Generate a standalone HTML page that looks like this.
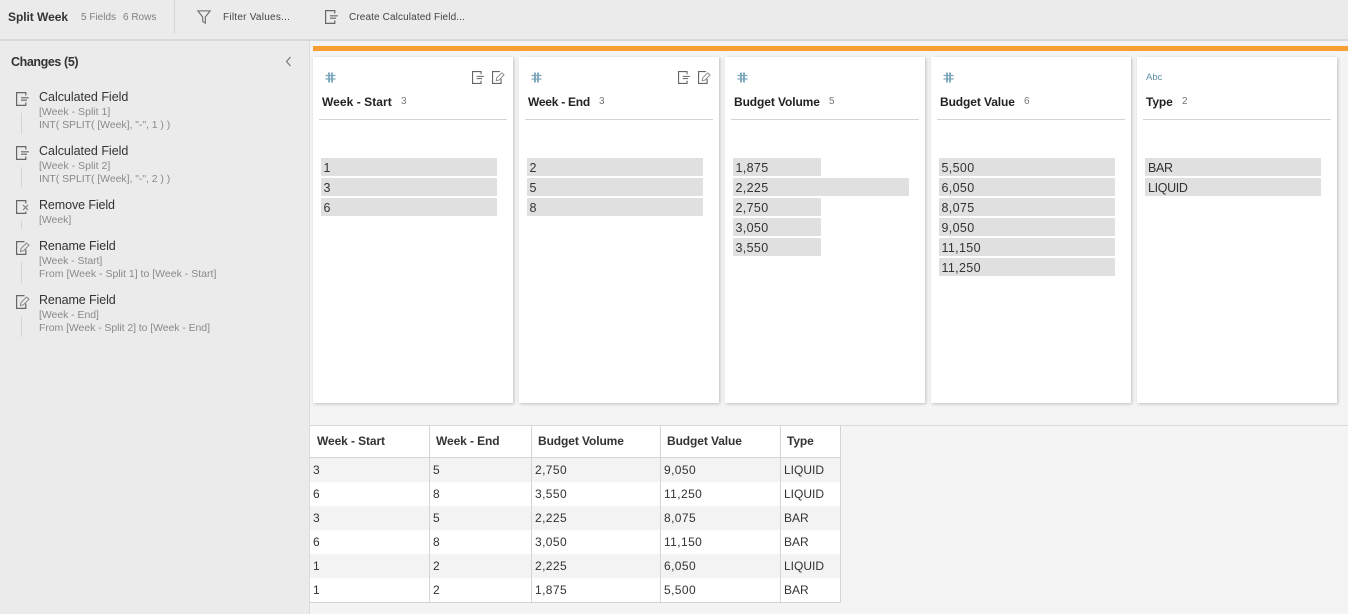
<!DOCTYPE html>
<html><head><meta charset="utf-8"><style>
html,body{margin:0;padding:0;width:1348px;height:614px;overflow:hidden;background:#f4f4f4}
body{position:relative;font-family:"Liberation Sans",sans-serif;color:#2a2a2a}
div,span,svg{position:absolute;white-space:nowrap}
.t{line-height:16px;height:16px}
.title{font-size:12.5px;color:#333;letter-spacing:-.02px}
.sub{font-size:10.5px;color:#8a8a8a;letter-spacing:-.05px}
.card{top:57px;width:200px;height:346px;background:#fff;box-shadow:1px 1px 3px rgba(0,0,0,.22)}
.rule{left:6px;top:62px;width:188px;height:1px;background:#d4d4d4}
.h{left:9px;top:37px;font-size:12px;font-weight:bold;color:#222;letter-spacing:-.1px}
.c{top:37px;font-size:10px;color:#777}
.bar{background:#e0e0e0;height:18px;font-size:12.5px;line-height:20px;color:#333;box-sizing:border-box;padding-left:3px}
.n{padding-left:2.5px;letter-spacing:.35px}
.cap{letter-spacing:-.35px}
.th{top:426px;font-size:12px;font-weight:bold;color:#333;line-height:31px;letter-spacing:-.1px}
.td{font-size:12px;color:#333;line-height:24px}
.m{letter-spacing:.4px}
.vl{top:425px;width:1px;height:178px;background:#d4d4d4}
.row{left:310px;width:530px;height:24px}
.ln{left:39px;width:0;border-left:1px solid #d4d4d4}
.i{fill:none;stroke:#666;stroke-width:1.2}
</style></head><body>

<svg width="0" height="0" style="left:0;top:0"><defs>
<symbol id="calc" viewBox="0 0 13 14"><path d="M9.8 3.5V.6H.6V13.4H9.8V10.5" fill="none" stroke="#666" stroke-width="1.2"/><path d="M5 5.8H12.8M5 8.2H11" fill="none" stroke="#666" stroke-width="1.1"/></symbol>
<symbol id="edit" viewBox="0 0 14 14"><path d="M8.5 .6H.6V13.4H9.8V8.5" fill="none" stroke="#666" stroke-width="1.2"/><path d="M4.5 10.5L5 7.5 10.5 2 13 4.2 7.5 9.8Z" fill="none" stroke="#888" stroke-width="1"/></symbol>
<symbol id="hash" viewBox="0 0 11 11"><path d="M4 .5V10.5M7 .5V10.5" fill="none" stroke="#3f7f9f" stroke-width="1.3"/><path d="M.5 3.5H10.5M.5 7H10.5" fill="none" stroke="#7ea6ba" stroke-width="1.2"/></symbol>
</defs></svg>

<!-- top bar -->
<div style="left:0;top:0;width:1348px;height:39px;background:#ebebeb"></div>
<div style="left:0;top:39px;width:1348px;height:2px;background:#d8d8d8"></div>
<div style="left:174px;top:0;width:1px;height:34px;background:#d4d4d4"></div>
<div class="t" style="left:8px;top:9px;font-size:12px;font-weight:bold;color:#333;letter-spacing:-.05px">Split Week</div>
<div class="t" style="left:81px;top:10px;font-size:10px;color:#808080">5 Fields</div>
<div class="t" style="left:123px;top:10px;font-size:10px;color:#808080">6 Rows</div>
<svg style="left:197px;top:10px" width="14" height="14" viewBox="0 0 16 16"><path d="M1 1H15L9.5 8V15L6.5 13V8Z" class="i"/></svg>
<div class="t" style="left:223px;top:10px;font-size:10px;color:#444;letter-spacing:.25px">Filter Values...</div>
<svg style="left:325px;top:10px" width="13" height="14"><use href="#calc"/></svg>
<div class="t" style="left:349px;top:10px;font-size:10px;color:#444;letter-spacing:.12px">Create Calculated Field...</div>

<!-- sidebar -->
<div style="left:0;top:41px;width:309px;height:573px;background:#ebebeb"></div>
<div style="left:309px;top:41px;width:1px;height:573px;background:#dcdcdc"></div>
<div class="t" style="left:11px;top:54px;font-size:12.5px;font-weight:bold;color:#333;letter-spacing:-.4px">Changes (5)</div>
<svg style="left:285px;top:56px" width="7" height="11"><path d="M5.5 1L1.5 5.5 5.5 10" fill="none" stroke="#777" stroke-width="1.2"/></svg>

<svg style="left:16px;top:92px" width="13" height="14"><use href="#calc"/></svg>
<div class="ln" style="left:21px;top:113px;height:21px"></div>
<div class="t title" style="left:39px;top:89px">Calculated Field</div>
<div class="t sub" style="left:39px;top:104px;letter-spacing:.02px">[Week - Split 1]</div>
<div class="t sub" style="left:39px;top:117px">INT( SPLIT( [Week], "-", 1 ) )</div>

<svg style="left:16px;top:146px" width="13" height="14"><use href="#calc"/></svg>
<div class="ln" style="left:21px;top:167px;height:21px"></div>
<div class="t title" style="left:39px;top:143px">Calculated Field</div>
<div class="t sub" style="left:39px;top:158px;letter-spacing:.02px">[Week - Split 2]</div>
<div class="t sub" style="left:39px;top:171px">INT( SPLIT( [Week], "-", 2 ) )</div>

<svg style="left:16px;top:200px" width="13" height="14" viewBox="0 0 13 14"><path d="M9.8 3.5V.6H.6V13.4H9.8V11.5" class="i"/><path d="M7 5L12 10M12 5L7 10" fill="none" stroke="#777" stroke-width="1"/></svg>
<div class="ln" style="left:21px;top:221px;height:8px"></div>
<div class="t title" style="left:39px;top:197px;letter-spacing:-.1px">Remove Field</div>
<div class="t sub" style="left:39px;top:212px">[Week]</div>

<svg style="left:16px;top:241px" width="14" height="14"><use href="#edit"/></svg>
<div class="ln" style="left:21px;top:262px;height:21px"></div>
<div class="t title" style="left:39px;top:238px;letter-spacing:-.1px">Rename Field</div>
<div class="t sub" style="left:39px;top:253px">[Week - Start]</div>
<div class="t sub" style="left:39px;top:266px;letter-spacing:.01px">From [Week - Split 1] to [Week - Start]</div>

<svg style="left:16px;top:295px" width="14" height="14"><use href="#edit"/></svg>
<div class="ln" style="left:21px;top:316px;height:21px"></div>
<div class="t title" style="left:39px;top:292px;letter-spacing:-.1px">Rename Field</div>
<div class="t sub" style="left:39px;top:307px">[Week - End]</div>
<div class="t sub" style="left:39px;top:320px;letter-spacing:-.07px">From [Week - Split 2] to [Week - End]</div>

<!-- orange bar -->
<div style="left:313px;top:46px;width:1035px;height:5px;background:#f89f33"></div>

<!-- cards -->
<div class="card" style="left:313px">
 <svg style="left:12px;top:15px" width="11" height="11"><use href="#hash"/></svg>
 <svg style="left:159px;top:14px" width="12" height="13"><use href="#calc"/></svg>
 <svg style="left:179px;top:14px" width="13" height="13"><use href="#edit"/></svg>
 <div class="t h" style="left:9px;letter-spacing:.05px">Week - Start</div><div class="t c" style="left:88px">3</div>
 <div class="rule"></div>
 <div class="bar n" style="left:8px;top:101px;width:176px">1</div>
 <div class="bar n" style="left:8px;top:121px;width:176px">3</div>
 <div class="bar n" style="left:8px;top:141px;width:176px">6</div>
</div>
<div class="card" style="left:519px">
 <svg style="left:12px;top:15px" width="11" height="11"><use href="#hash"/></svg>
 <svg style="left:159px;top:14px" width="12" height="13"><use href="#calc"/></svg>
 <svg style="left:179px;top:14px" width="13" height="13"><use href="#edit"/></svg>
 <div class="t h" style="letter-spacing:-.25px">Week - End</div><div class="t c" style="left:80px">3</div>
 <div class="rule"></div>
 <div class="bar n" style="left:8px;top:101px;width:176px">2</div>
 <div class="bar n" style="left:8px;top:121px;width:176px">5</div>
 <div class="bar n" style="left:8px;top:141px;width:176px">8</div>
</div>
<div class="card" style="left:725px">
 <svg style="left:12px;top:15px" width="11" height="11"><use href="#hash"/></svg>
 <div class="t h">Budget Volume</div><div class="t c" style="left:104px">5</div>
 <div class="rule"></div>
 <div class="bar n" style="left:8px;top:101px;width:88px">1,875</div>
 <div class="bar n" style="left:8px;top:121px;width:176px">2,225</div>
 <div class="bar n" style="left:8px;top:141px;width:88px">2,750</div>
 <div class="bar n" style="left:8px;top:161px;width:88px">3,050</div>
 <div class="bar n" style="left:8px;top:181px;width:88px">3,550</div>
</div>
<div class="card" style="left:931px">
 <svg style="left:12px;top:15px" width="11" height="11"><use href="#hash"/></svg>
 <div class="t h">Budget Value</div><div class="t c" style="left:93px">6</div>
 <div class="rule"></div>
 <div class="bar n" style="left:8px;top:101px;width:176px">5,500</div>
 <div class="bar n" style="left:8px;top:121px;width:176px">6,050</div>
 <div class="bar n" style="left:8px;top:141px;width:176px">8,075</div>
 <div class="bar n" style="left:8px;top:161px;width:176px">9,050</div>
 <div class="bar n" style="left:8px;top:181px;width:176px">11,150</div>
 <div class="bar n" style="left:8px;top:201px;width:176px">11,250</div>
</div>
<div class="card" style="left:1137px">
 <div class="t" style="left:9px;top:13px;font-size:9.5px;color:#5f8da6">Abc</div>
 <div class="t h">Type</div><div class="t c" style="left:45px">2</div>
 <div class="rule"></div>
 <div class="bar cap" style="left:8px;top:101px;width:176px">BAR</div>
 <div class="bar cap" style="left:8px;top:121px;width:176px">LIQUID</div>
</div>

<!-- table -->
<div style="left:310px;top:425px;width:1038px;height:1px;background:#d8d8d8"></div>
<div style="left:310px;top:426px;width:530px;height:31px;background:#fff"></div>
<div class="row" style="top:458px;background:#f3f3f3"></div>
<div class="row" style="top:482px;background:#fff"></div>
<div class="row" style="top:506px;background:#f3f3f3"></div>
<div class="row" style="top:530px;background:#fff"></div>
<div class="row" style="top:554px;background:#f3f3f3"></div>
<div class="row" style="top:578px;background:#fff"></div>
<div style="left:310px;top:457px;width:531px;height:1px;background:#d4d4d4"></div>
<div style="left:310px;top:602px;width:531px;height:1px;background:#d4d4d4"></div>
<div class="vl" style="left:429px"></div>
<div class="vl" style="left:531px"></div>
<div class="vl" style="left:660px"></div>
<div class="vl" style="left:780px"></div>
<div class="vl" style="left:840px"></div>

<div class="th" style="left:317px">Week - Start</div>
<div class="th" style="left:436px">Week - End</div>
<div class="th" style="left:538px">Budget Volume</div>
<div class="th" style="left:667px">Budget Value</div>
<div class="th" style="left:787px">Type</div>

<div class="td m" style="left:313px;top:458px">3</div><div class="td m" style="left:433px;top:458px">5</div><div class="td m" style="left:535px;top:458px">2,750</div><div class="td m" style="left:664px;top:458px">9,050</div><div class="td" style="left:784px;top:458px">LIQUID</div>
<div class="td m" style="left:313px;top:482px">6</div><div class="td m" style="left:433px;top:482px">8</div><div class="td m" style="left:535px;top:482px">3,550</div><div class="td m" style="left:664px;top:482px">11,250</div><div class="td" style="left:784px;top:482px">LIQUID</div>
<div class="td m" style="left:313px;top:506px">3</div><div class="td m" style="left:433px;top:506px">5</div><div class="td m" style="left:535px;top:506px">2,225</div><div class="td m" style="left:664px;top:506px">8,075</div><div class="td" style="left:784px;top:506px">BAR</div>
<div class="td m" style="left:313px;top:530px">6</div><div class="td m" style="left:433px;top:530px">8</div><div class="td m" style="left:535px;top:530px">3,050</div><div class="td m" style="left:664px;top:530px">11,150</div><div class="td" style="left:784px;top:530px">BAR</div>
<div class="td m" style="left:313px;top:554px">1</div><div class="td m" style="left:433px;top:554px">2</div><div class="td m" style="left:535px;top:554px">2,225</div><div class="td m" style="left:664px;top:554px">6,050</div><div class="td" style="left:784px;top:554px">LIQUID</div>
<div class="td m" style="left:313px;top:578px">1</div><div class="td m" style="left:433px;top:578px">2</div><div class="td m" style="left:535px;top:578px">1,875</div><div class="td m" style="left:664px;top:578px">5,500</div><div class="td" style="left:784px;top:578px">BAR</div>
</body></html>
